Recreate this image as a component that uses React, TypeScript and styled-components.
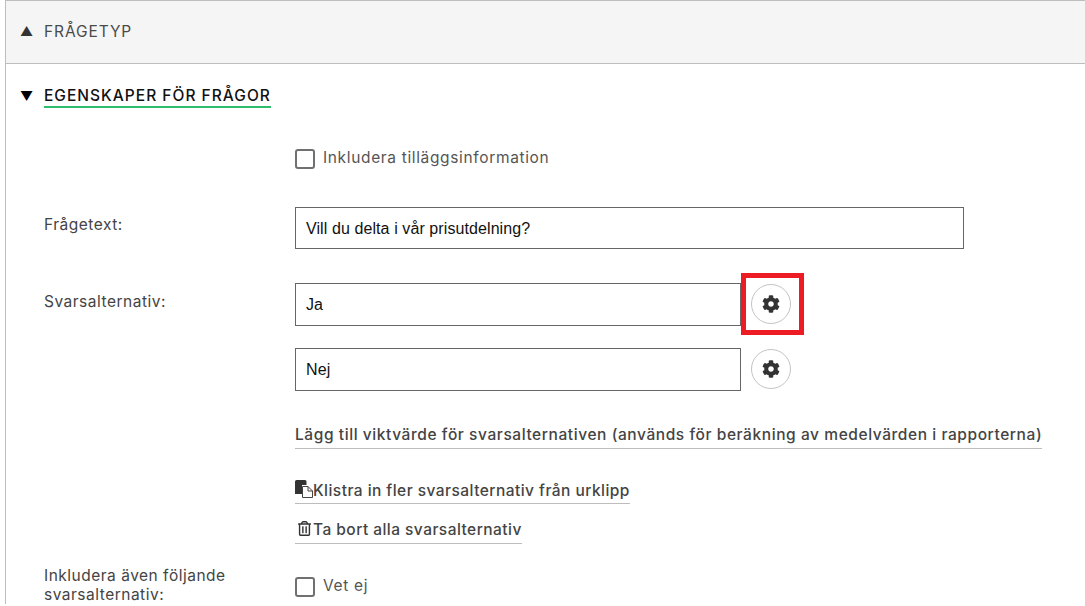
import React from "react";
import styled, { createGlobalStyle } from "styled-components";
import { FaCog, FaRegTrashAlt } from "react-icons/fa";

const GlobalStyle = createGlobalStyle`
  html, body {
    margin: 0;
    padding: 0;
    height: 606px;
    overflow: hidden;
    background: #fff;
  }
  * { box-sizing: border-box; }
`;

const FONT = `"Inter", "Open Sans", sans-serif`;

const Panel = styled.div`
  margin-left: 5px;
  width: 1090px;
  border-left: 1px solid #bdbdbd;
  border-top: 1px solid #bdbdbd;
  font-family: ${FONT};
  color: #444;
`;

const SectionHeader = styled.div`
  display: flex;
  align-items: center;
  height: 63px;
  padding: 0 0 2px 14px;
  background: #f5f5f5;
  border-bottom: 1px solid #bdbdbd;
`;

const Arrow = styled.span<{ $dark?: boolean }>`
  width: 24px;
  font-size: 13px;
  line-height: 1;
  color: ${(p) => (p.$dark ? "#000" : "#333")};
`;

const HeaderText = styled.span`
  font-size: 15.5px;
  letter-spacing: 0.9px;
  color: #4a4a4a;
`;

const Body = styled.div`
  padding: 20px 0 0 14px;
`;

const OpenHeader = styled.div`
  display: flex;
  align-items: center;
  height: 24px;
`;

const OpenTitle = styled.span`
  font-size: 15.5px;
  font-weight: 500;
  letter-spacing: 1.02px;
  color: #111;
  height: 24px;
  line-height: 24px;
  border-bottom: 2px solid #2dbd6e;
  white-space: nowrap;
`;

const Form = styled.div`
  display: flex;
  flex-direction: column;
  padding-left: 24px;
`;

const Row = styled.div<{ $top: number }>`
  display: grid;
  grid-template-columns: 251px 1fr;
  margin-top: ${(p) => p.$top}px;
`;

const Label = styled.div<{ $pad?: number }>`
  font-size: 15.5px;
  line-height: 19px;
  letter-spacing: 0.5px;
  color: #444;
  padding-top: ${(p) => p.$pad ?? 0}px;
`;

const Field = styled.div`
  display: flex;
  flex-direction: column;
`;

const CheckRow = styled.label<{ $top?: number }>`
  display: flex;
  align-items: center;
  gap: 8px;
  height: 20px;
  margin-top: ${(p) => p.$top ?? 0}px;
  font-size: 15.5px;
  letter-spacing: 0.65px;
  color: #555;
`;

const CheckText = styled.span`
  margin-top: -4px;
`;

const Box = styled.span`
  width: 20px;
  height: 20px;
  border: 2px solid #707070;
  border-radius: 3px;
  background: #fff;
`;

const TextInput = styled.div<{ $w: number; $h: number; $textPad?: number }>`
  width: ${(p) => p.$w}px;
  height: ${(p) => p.$h}px;
  display: flex;
  align-items: center;
  padding: ${(p) => p.$textPad ?? 0}px 0 0 10px;
  border: 1px solid #666;
  background: #fff;
  font-family: "Liberation Sans", Arial, sans-serif;
  font-size: 16px;
  letter-spacing: 0.09px;
  color: #111;
`;

const OptionRow = styled.div<{ $top?: number }>`
  display: flex;
  align-items: center;
  gap: 10px;
  margin-top: ${(p) => p.$top ?? 0}px;
`;

const GearWrap = styled.div`
  position: relative;
  width: 40px;
  height: 40px;
  margin-top: -1px;
`;

const GearButton = styled.div`
  width: 40px;
  height: 40px;
  display: flex;
  align-items: center;
  justify-content: center;
  border: 1px solid #c4c4c4;
  border-radius: 50%;
  color: #333;
  font-size: 18px;
`;

const Highlight = styled.div`
  position: absolute;
  left: -10px;
  top: -11px;
  width: 63px;
  height: 62px;
  border: 5px solid #ed1c24;
`;

const LinkLine = styled.div<{ $top: number; $h: number; $spacing: number }>`
  align-self: flex-start;
  display: flex;
  align-items: center;
  height: ${(p) => p.$h}px;
  margin-top: ${(p) => p.$top}px;
  border-bottom: 1px solid #bdbdbd;
  font-size: 15.5px;
  font-weight: 500;
  letter-spacing: ${(p) => p.$spacing}px;
  color: #444;
  white-space: nowrap;
`;

const PasteSvg = styled.svg`
  width: 18px;
  height: 19px;
  flex: none;
  margin-top: -3px;
`;

const TrashIcon = styled(FaRegTrashAlt)`
  font-size: 15px;
  color: #333;
  margin: -2px 1px 0 2px;
`;

const PasteIcon: React.FC = () => (
  <PasteSvg viewBox="0 0 18 19">
    <path d="M0 2.5 Q0 1 1.5 1 H10 Q11.5 1 11.5 2.5 V6 H7 V15 H0 Z" fill="#333" />
    <path d="M7.5 7.5 H13 L17.5 12 V18.5 H7.5 Z" fill="#fff" stroke="#444" strokeWidth="1" />
    <path d="M13 7.5 V12 H17.5" fill="none" stroke="#444" strokeWidth="1" />
  </PasteSvg>
);

const GearOption: React.FC<{ value: string; top?: number; marked?: boolean }> = ({ value, top, marked }) => (
  <OptionRow $top={top}>
    <TextInput $w={446} $h={43}>{value}</TextInput>
    <GearWrap>
      <GearButton><FaCog /></GearButton>
      {marked && <Highlight />}
    </GearWrap>
  </OptionRow>
);

export default function App() {
  return (
    <>
      <GlobalStyle />
      <Panel>
        <SectionHeader>
          <Arrow>▲</Arrow>
          <HeaderText>FRÅGETYP</HeaderText>
        </SectionHeader>
        <Body>
          <OpenHeader>
            <Arrow $dark>▼</Arrow>
            <OpenTitle>EGENSKAPER FÖR FRÅGOR</OpenTitle>
          </OpenHeader>
          <Form>
            <Row $top={41}>
              <div />
              <CheckRow><Box /><CheckText>Inkludera tilläggsinformation</CheckText></CheckRow>
            </Row>
            <Row $top={38}>
              <Label $pad={8}>Frågetext:</Label>
              <TextInput $w={669} $h={42} $textPad={2}>Vill du delta i vår prisutdelning?</TextInput>
            </Row>
            <Row $top={34}>
              <Label $pad={9}>Svarsalternativ:</Label>
              <Field>
                <GearOption value="Ja" marked />
                <GearOption value="Nej" top={22} />
                <LinkLine $top={29} $h={29} $spacing={0.58}>Lägg till viktvärde för svarsalternativen (används för beräkning av medelvärden i rapporterna)</LinkLine>
                <LinkLine $top={28} $h={27} $spacing={0.46}><PasteIcon />Klistra in fler svarsalternativ från urklipp</LinkLine>
                <LinkLine $top={11} $h={29} $spacing={0.46}><TrashIcon />Ta bort alla svarsalternativ</LinkLine>
              </Field>
            </Row>
            <Row $top={22}>
              <Label>Inkludera även följande<br />svarsalternativ:</Label>
              <CheckRow $top={11}><Box /><CheckText>Vet ej</CheckText></CheckRow>
            </Row>
          </Form>
        </Body>
      </Panel>
    </>
  );
}
